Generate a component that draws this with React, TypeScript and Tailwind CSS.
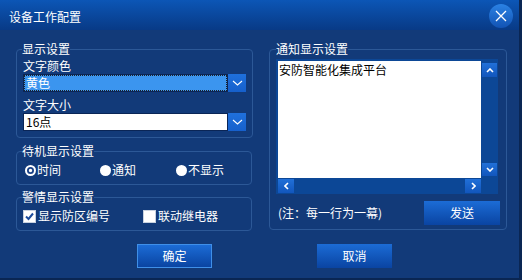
import React from 'react';

// small white chevron used in combo and scroll buttons
function Chevron({ dir = 'down', w = 10, h = 6, sw = 1.2 }: { dir?: 'down' | 'up' | 'left' | 'right'; w?: number; h?: number; sw?: number }) {
  const pts: Record<string, string> = {
    down: `1,1 ${w / 2},${h - 1} ${w - 1},1`,
    up: `1,${h - 1} ${w / 2},1 ${w - 1},${h - 1}`,
    left: `${w - 1},1 1,${h / 2} ${w - 1},${h - 1}`,
    right: `1,1 ${w - 1},${h / 2} 1,${h - 1}`,
  };
  return (
    <svg width={w} height={h} viewBox={`0 0 ${w} ${h}`}>
      <polyline points={pts[dir]} fill="none" stroke="white" strokeWidth={sw} />
    </svg>
  );
}

function ComboBox({ value, selected }: { value: string; selected?: boolean }) {
  return (
    <div className="flex h-[18px] w-[223px]">
      <div className="flex-1 border border-[#0a2556] bg-white">
        {selected ? (
          <div className="h-full bg-[#3b95ef] border border-dotted border-[#222] pl-[1px] leading-[14px] text-white">
            {value}
          </div>
        ) : (
          <div className="h-full pl-[2px] leading-[16px] text-black">{value}</div>
        )}
      </div>
      <div className="w-[18px] h-[18px] bg-gradient-to-b from-[#1f70dc] to-[#1660cc] flex items-center justify-center">
        <Chevron dir="down" w={11} h={6} sw={1.1} />
      </div>
    </div>
  );
}

function Radio({ label, checked, width }: { label: string; checked?: boolean; width: string }) {
  return (
    <div className={`flex items-center gap-[1px] ${width}`}>
      <svg width="11" height="11" viewBox="0 0 11 11">
        <circle cx="5.5" cy="5.5" r="5.5" fill="white" />
        {checked && <circle cx="5.5" cy="5.5" r="2.6" fill="white" stroke="#1a4288" strokeWidth="1.8" />}
      </svg>
      <span>{label}</span>
    </div>
  );
}

function CheckBox({ label, checked, width }: { label: string; checked?: boolean; width: string }) {
  return (
    <div className={`flex items-center gap-[2px] ${width}`}>
      <svg width="13" height="13" viewBox="0 0 13 13">
        <rect x="0" y="0" width="13" height="13" fill="white" />
        <rect x="0.5" y="0.5" width="12" height="12" fill="none" stroke="#c8d2e0" />
        {checked && <polyline points="3,6.5 5.5,9 10,3.5" fill="none" stroke="#1c4c9c" strokeWidth="2" />}
      </svg>
      <span>{label}</span>
    </div>
  );
}

function ScrollBtn({ dir, size }: { dir: 'up' | 'down' | 'left' | 'right'; size: string }) {
  const vertical = dir === 'up' || dir === 'down';
  return (
    <div className={`${size} bg-gradient-to-b from-[#2170d8] to-[#1256bc] flex items-center justify-center`}>
      {vertical ? <Chevron dir={dir} w={8} h={5} sw={1.6} /> : <Chevron dir={dir} w={5} h={8} sw={1.6} />}
    </div>
  );
}

function Btn({ label, focused }: { label: string; focused?: boolean }) {
  return (
    <div
      className={`h-[24px] w-[75px] flex items-center justify-center bg-gradient-to-b from-[#1c6cd6] to-[#0a44a2] text-white ${
        focused ? 'border border-[#3f8fe8]' : ''
      }`}
    >
      {label}
    </div>
  );
}

export default function App() {
  return (
    <div className="w-[522px] h-[280px] bg-[#123a79] flex flex-col border-r-[3px] border-b-[2px] border-[#0a2653] text-white text-[12px] leading-[14px] font-['Noto_Sans_CJK_SC',sans-serif]">
      {/* Title bar */}
      <div className="h-[30px] shrink-0 bg-gradient-to-b from-[#0c56b6] to-[#083a86] flex items-center justify-between pl-[9px] pr-[6px]">
        <span className="pt-[3px]">设备工作配置</span>
        <div className="w-[24px] h-[24px] mt-[2px] rounded-full bg-gradient-to-b from-[#2b82e4] to-[#1253b4] flex items-center justify-center">
          <svg width="12" height="12" viewBox="0 0 12 12">
            <path d="M1 1 L11 11 M11 1 L1 11" stroke="white" strokeWidth="1.3" />
          </svg>
        </div>
      </div>

      {/* Columns */}
      <div className="flex pl-[16px] pt-[12px] gap-[17px]">
        {/* Left column */}
        <div className="w-[236px] flex flex-col">
          <fieldset className="border border-[#2c5897] rounded-[4px] px-[6px] pb-[6px]">
            <legend className="-ml-[1px] leading-[14px]">显示设置</legend>
            <div className="mt-[2px] leading-[16px]">文字颜色</div>
            <ComboBox value="黄色" selected />
            <div className="mt-[5px] leading-[16px]">文字大小</div>
            <ComboBox value="16点" />
          </fieldset>

          <fieldset className="mt-[6px] border border-[#2c5897] rounded-[4px] pl-[8px] pb-[6px]">
            <legend className="-ml-[3px] leading-[14px]">待机显示设置</legend>
            <div className="mt-[4px] h-[16px] flex items-center">
              <Radio label="时间" checked width="w-[75px]" />
              <Radio label="通知" width="w-[76px]" />
              <Radio label="不显示" width="w-[60px]" />
            </div>
          </fieldset>

          <fieldset className="mt-[5px] border border-[#2c5897] rounded-[4px] pl-[6px] pb-[6px]">
            <legend className="-ml-[1px] leading-[14px]">警情显示设置</legend>
            <div className="mt-[4px] h-[16px] flex items-center">
              <CheckBox label="显示防区编号" checked width="w-[120px]" />
              <CheckBox label="联动继电器" width="w-[80px]" />
            </div>
          </fieldset>
        </div>

        {/* Right column */}
        <div className="w-[237px]">
          <fieldset className="border border-[#2c5897] rounded-[4px] px-[6px] pb-[4px]">
            <legend className="leading-[14px]">通知显示设置</legend>
            <div className="mt-[3px] w-[222px] h-[135px] bg-[#0c4796] pl-[2px] pt-[2px] grid grid-cols-[203px_17px] grid-rows-[117px_16px]">
              <div className="bg-white text-black pl-[1px] pt-[2px]">安防智能化集成平台</div>
              <div className="flex flex-col justify-between items-center pt-[2px] pb-[2px]">
                <ScrollBtn dir="up" size="w-[15px] h-[14px]" />
                <ScrollBtn dir="down" size="w-[15px] h-[13px]" />
              </div>
              <div className="flex justify-between items-center">
                <ScrollBtn dir="left" size="w-[16px] h-[14px]" />
                <ScrollBtn dir="right" size="w-[16px] h-[14px]" />
              </div>
              <div />
            </div>
            <div className="mt-[7px] w-[224px] flex items-center justify-between">
              <span className="pl-[2px]">(注：每一行为一幕)</span>
              <div className="h-[24px] w-[76px] flex items-center justify-center bg-gradient-to-b from-[#1c6cd6] to-[#0a44a2]">发送</div>
            </div>
          </fieldset>
        </div>
      </div>

      {/* Bottom buttons */}
      <div className="flex pl-[137px] gap-[105px] mt-[13px]">
        <Btn label="确定" focused />
        <Btn label="取消" />
      </div>
    </div>
  );
}
